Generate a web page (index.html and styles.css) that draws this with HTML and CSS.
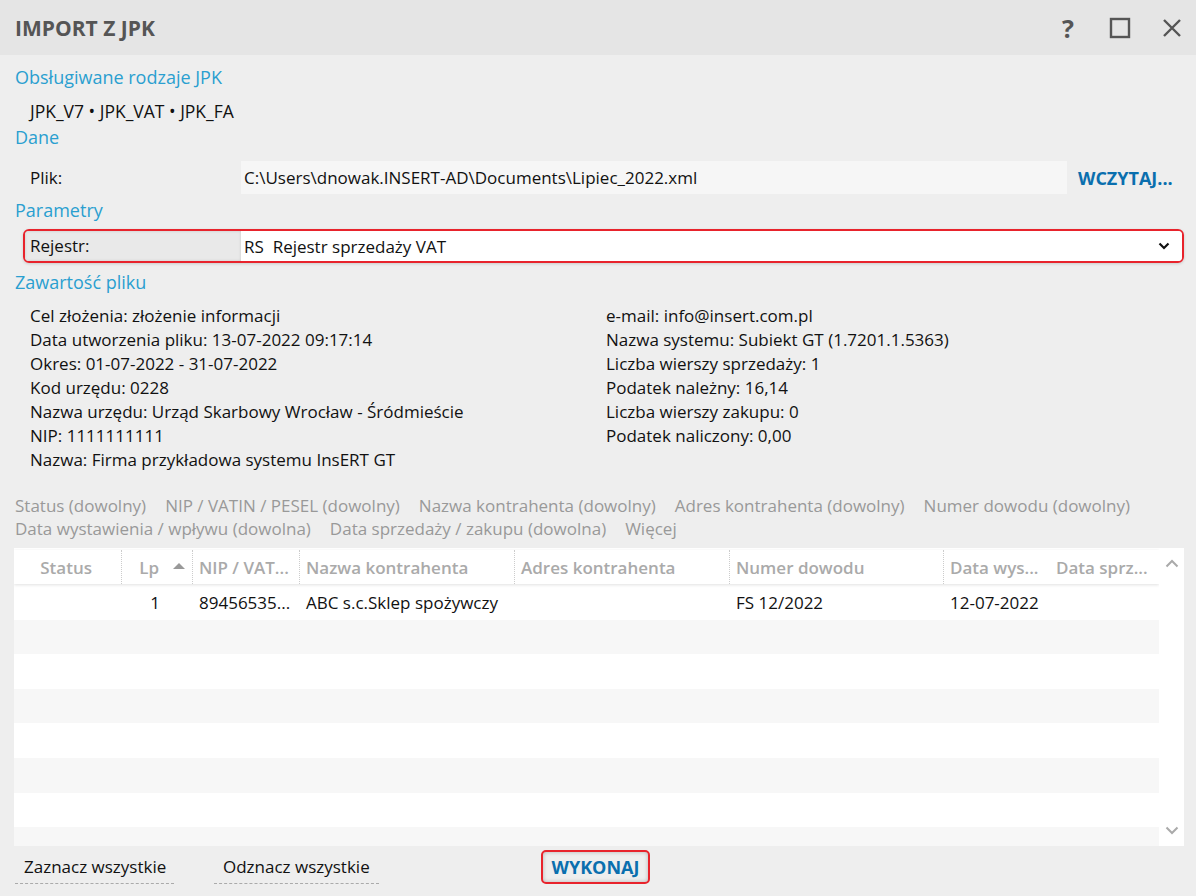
FILE: index.html
```html
<!DOCTYPE html>
<html lang="pl">
<head>
<meta charset="utf-8">
<title>Import z JPK</title>
<link rel="stylesheet" href="styles.css">
</head>
<body>
<div class="window">
  <header class="titlebar">
    <h1 class="title">IMPORT Z JPK</h1>
    <div class="controls">
      <span class="ctl help">?</span>
      <span class="ctl"><svg width="22" height="22" viewBox="0 0 22 22"><rect x="2" y="2" width="18" height="18" fill="none" stroke="#555" stroke-width="2.4"/></svg></span>
      <span class="ctl"><svg width="22" height="22" viewBox="0 0 22 22"><path d="M3 3 L19 19 M19 3 L3 19" stroke="#555" stroke-width="2.4" fill="none"/></svg></span>
    </div>
  </header>

  <main class="content">
    <div class="heading first">Obsługiwane rodzaje JPK</div>
    <div class="types">JPK_V7 • JPK_VAT • JPK_FA</div>

    <div class="heading">Dane</div>
    <div class="field-row file-row">
      <div class="label">Plik:</div>
      <div class="input">C:\Users\dnowak.INSERT-AD\Documents\Lipiec_2022.xml</div>
      <div class="action">WCZYTAJ...</div>
    </div>

    <div class="heading">Parametry</div>
    <div class="select-row">
      <div class="label">Rejestr:</div>
      <div class="select-value">
        <span>RS&nbsp;&nbsp;Rejestr sprzedaży VAT</span>
        <svg class="chev" width="12" height="8" viewBox="0 0 12 8"><path d="M1.5 1.5 L6 6 L10.5 1.5" stroke="#111" stroke-width="2.2" fill="none"/></svg>
      </div>
    </div>

    <div class="heading">Zawartość pliku</div>
    <div class="info">
      <div class="info-col">
        <div>Cel złożenia: złożenie informacji</div>
        <div>Data utworzenia pliku: 13-07-2022 09:17:14</div>
        <div>Okres: 01-07-2022 - 31-07-2022</div>
        <div>Kod urzędu: 0228</div>
        <div>Nazwa urzędu: Urząd Skarbowy Wrocław - Śródmieście</div>
        <div>NIP: 1111111111</div>
        <div>Nazwa: Firma przykładowa systemu InsERT GT</div>
      </div>
      <div class="info-col">
        <div>e-mail: info@insert.com.pl</div>
        <div>Nazwa systemu: Subiekt GT (1.7201.1.5363)</div>
        <div>Liczba wierszy sprzedaży: 1</div>
        <div>Podatek należny: 16,14</div>
        <div>Liczba wierszy zakupu: 0</div>
        <div>Podatek naliczony: 0,00</div>
      </div>
    </div>

    <div class="filters">
      <span>Status (dowolny)</span>
      <span>NIP / VATIN / PESEL (dowolny)</span>
      <span>Nazwa kontrahenta (dowolny)</span>
      <span>Adres kontrahenta (dowolny)</span>
      <span>Numer dowodu (dowolny)</span>
      <span>Data wystawienia / wpływu (dowolna)</span>
      <span>Data sprzedaży / zakupu (dowolna)</span>
      <span>Więcej</span>
    </div>

    <div class="grid-wrap">
      <div class="grid">
        <div class="grid-head">
          <div class="c c-status r">Status</div>
          <div class="c c-lp r">Lp<span class="sort"></span></div>
          <div class="c c-nip">NIP / VAT...</div>
          <div class="c c-name">Nazwa kontrahenta</div>
          <div class="c c-addr">Adres kontrahenta</div>
          <div class="c c-num">Numer dowodu</div>
          <div class="c c-dw">Data wys...</div>
          <div class="c c-ds">Data sprz...</div>
        </div>
        <div class="grid-body">
          <div class="row">
            <div class="c c-status"></div>
            <div class="c c-lp r">1</div>
            <div class="c c-nip">89456535...</div>
            <div class="c c-name">ABC s.c.Sklep spożywczy</div>
            <div class="c c-addr"></div>
            <div class="c c-num">FS 12/2022</div>
            <div class="c c-dw">12-07-2022</div>
            <div class="c c-ds"></div>
          </div>
          <div class="row"></div>
          <div class="row"></div>
          <div class="row"></div>
          <div class="row"></div>
          <div class="row"></div>
          <div class="row"></div>
          <div class="row"></div>
        </div>
      </div>
      <div class="scrollbar">
        <svg width="14" height="9" viewBox="0 0 14 9"><path d="M1.5 7.5 L7 2 L12.5 7.5" stroke="#aaa" stroke-width="2" fill="none"/></svg>
        <svg width="14" height="9" viewBox="0 0 14 9"><path d="M1.5 1.5 L7 7 L12.5 1.5" stroke="#aaa" stroke-width="2" fill="none"/></svg>
      </div>
    </div>

    <footer class="footer">
      <span class="link link-1">Zaznacz wszystkie</span>
      <span class="link link-2">Odznacz wszystkie</span>
      <span class="execute">WYKONAJ</span>
    </footer>
  </main>
</div>
</body>
</html>
```

FILE: styles.css
```css
* { box-sizing: border-box; }
html, body { margin: 0; padding: 0; }
body {
  width: 1196px;
  height: 896px;
  background: #eeeeee;
  font-family: "Open Sans", "Noto Sans", sans-serif;
  font-size: 17px;
  color: #111;
  overflow: hidden;
}
.window { width: 1196px; height: 896px; background: #eeeeee; }

.titlebar {
  height: 55px;
  background: #e5e5e5;
  display: flex;
  align-items: center;
  justify-content: space-between;
  padding: 0 13px 0 15px;
}
.title {
  margin: 0;
  font-size: 21px;
  font-weight: 700;
  color: #555;
}
.controls { display: flex; align-items: center; gap: 30px; }
.ctl { display: flex; align-items: center; justify-content: center; width: 22px; height: 22px; }
.help { font-size: 25px; font-weight: 700; color: #555; line-height: 22px; }

.content { padding: 0 12px 0 14px; }

.heading {
  color: #2a9fd0;
  font-size: 18px;
  line-height: 26px;
  height: 26px;
  padding-left: 1px;
}
.heading.first { margin-top: 9px; }
.types { margin-top: 8px; line-height: 26px; padding-left: 16px; font-size: 17.5px; }

.field-row {
  display: flex;
  align-items: center;
  height: 33px;
  margin-top: 11px;
}
.file-row .label { width: 227px; padding-left: 16px; }
.file-row .input {
  width: 826px;
  height: 33px;
  line-height: 33px;
  background: #f6f6f6;
  padding-left: 3px;
  white-space: nowrap;
}
.file-row .action {
  margin-left: 11px;
  color: #0a6fae;
  font-weight: 700;
  font-size: 18px;
  white-space: nowrap;
}

.file-row + .heading { margin-top: 3px; }

.select-row {
  margin-top: 6px;
  margin-left: 9px;
  width: 1161px;
  height: 34px;
  border: 2px solid #e8232c;
  border-radius: 6px;
  display: flex;
  overflow: hidden;
  box-shadow: 0 1px 3px rgba(0,0,0,0.15);
}
.select-row .label {
  width: 216px;
  background: #e9e9e9;
  line-height: 30px;
  padding-left: 5px;
  box-shadow: inset 0 0 3px rgba(0,0,0,0.15);
}
.select-value {
  flex: 1;
  background: #fff;
  display: flex;
  align-items: center;
  justify-content: space-between;
  padding: 0 12px 0 3px;
}
.select-row + .heading { margin-top: 6px; }

.info {
  display: grid;
  grid-template-columns: 576px 1fr;
  margin-top: 9px;
  padding-left: 16px;
  line-height: 24px;
}

.filters {
  margin-top: 22px;
  color: #999;
  line-height: 23px;
  display: flex;
  flex-wrap: wrap;
  column-gap: 19px;
  padding-left: 1px;
  width: 1150px;
}

.grid-wrap {
  margin-top: 8px;
  display: flex;
  width: 1170px;
  height: 298px;
}
.grid { width: 1145px; background: #fff; overflow: hidden; }
.grid-head {
  display: flex;
  height: 34px;
  align-items: stretch;
  background: #fff;
  box-shadow: 0 1px 3px rgba(0,0,0,0.12);
  position: relative;
  margin-top: 2px;
  color: #aaa;
  font-weight: 600;
}
.grid-head .c {
  border-right: 1px dotted #ccc;
  display: flex;
  align-items: center;
}
.grid-head .c.r { justify-content: flex-end; }
.grid-head .c-ds { border-right: none; }
.grid-head .c-dw { border-right: none; }
.c { padding: 0 6px; white-space: nowrap; overflow: hidden; }
.c.r { text-align: right; }
.c-status { width: 108px; padding-right: 29px; }
.c-lp { width: 71px; padding-right: 33px; }
.grid-head .c-lp { padding-right: 6px; }
.sort {
  display: inline-block;
  width: 0; height: 0;
  border-left: 6px solid transparent;
  border-right: 6px solid transparent;
  border-bottom: 6px solid #999;
  margin-left: 14px;
  margin-right: 1px;
  margin-bottom: 2px;
}
.c-nip { width: 107px; }
.c-name { width: 215px; }
.c-addr { width: 215px; }
.c-num { width: 214px; }
.c-dw { width: 106px; }
.c-ds { width: 107px; }

.grid-body { margin-top: 1px; }
.row {
  display: flex;
  height: 34.6px;
  align-items: center;
  background: #fff;
}
.row:nth-child(even) { background: #f7f7f7; }

.scrollbar {
  width: 25px;
  background: #fff;
  display: flex;
  flex-direction: column;
  justify-content: space-between;
  align-items: center;
  padding: 11px 0 11px;
}

.footer {
  display: flex;
  align-items: center;
  height: 36px;
  margin-top: 3px;
}
.link {
  padding: 0 0 3px 9px;
  line-height: 26px;
  border-bottom: 1px dashed #aaa;
  margin-top: 3px;
  white-space: nowrap;
}
.link-1 { margin-left: 1px; width: 159px; }
.link-2 { margin-left: 40px; width: 165px; }
.execute {
  margin-left: 162px;
  width: 109px;
  height: 34px;
  border: 2px solid #e8232c;
  border-radius: 5px;
  color: #0a6fae;
  font-weight: 700;
  font-size: 18px;
  display: flex;
  align-items: center;
  justify-content: center;
  box-shadow: inset 0 0 4px rgba(0,0,0,0.25);
}
```
